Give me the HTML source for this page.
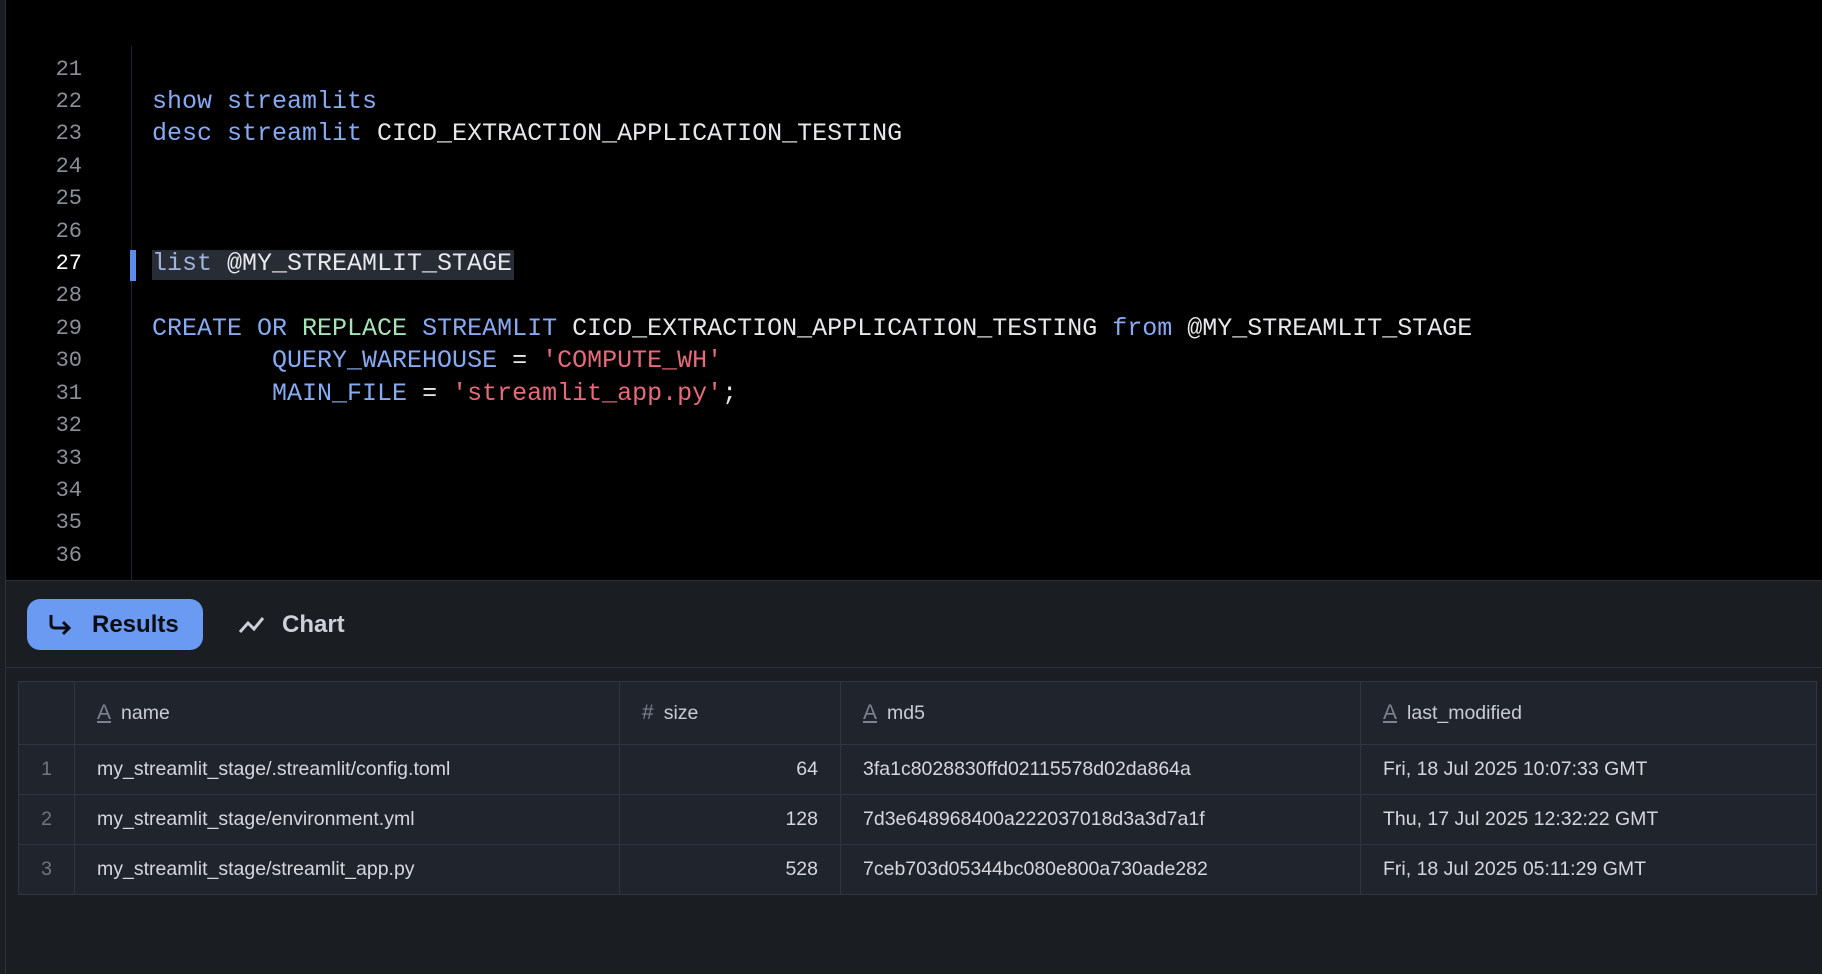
<!DOCTYPE html>
<html><head><meta charset="utf-8"><style>
*{margin:0;padding:0;box-sizing:border-box}
body{width:1822px;height:974px;background:#1a1d22;position:relative;overflow:hidden;font-family:"Liberation Sans",sans-serif}
#ed{position:absolute;left:0;top:0;width:1822px;height:581px;background:#000;border-bottom:1px solid #2b3039}
#lb{position:absolute;left:0;top:0;width:6px;height:974px;background:#1a1d22;border-right:1px solid #2c313a}
#gl{position:absolute;left:131px;top:46px;width:1px;height:535px;background:#22262d}
.ln{position:absolute;left:20px;width:62px;text-align:right;font:22px "Liberation Mono",monospace;color:#8a9099;line-height:32px}
.cd{position:absolute;left:152px;font:25px "Liberation Mono",monospace;letter-spacing:0px;color:#e8e8ea;line-height:32px;white-space:pre}
.k{color:#86aaf3}.g{color:#a6e3b9}.s{color:#e8697a}
#sel{position:absolute;left:152px;top:250px;width:362px;height:30px;background:#272c35}
#bar{position:absolute;left:130px;top:250px;width:6px;height:31px;background:#5b8def}
#btn{position:absolute;left:27px;top:599px;width:176px;height:51px;background:#6b9af3;border-radius:13px;color:#0b0d12;font-weight:bold;font-size:24px}
#chart{position:absolute;left:238px;top:599px;height:51px;color:#cdd0d6;font-weight:bold;font-size:24px}
#div{position:absolute;left:6px;top:667px;width:1816px;height:1px;background:#2c313a}
table{position:absolute;left:18px;top:681px;border-collapse:collapse;background:#1f242d;font-size:19.5px;color:#d4d7dc}
td{border:1px solid #2f3541;height:50px;padding:0 22px;white-space:nowrap}
tr.h td{height:63px;color:#c9ccd2;font-size:19.5px}
.n{color:#6f7682;text-align:center;padding:0}
.r{text-align:right}
.ic{color:#7d838e;margin-right:10px;font-size:21px}
</style></head><body>
<div id="ed"></div><div id="lb"></div><div id="gl"></div>
<div id="sel"></div><div id="bar"></div>
<div class="ln" style="top:54px">21</div>
<div class="ln" style="top:86px">22</div>
<div class="ln" style="top:118px">23</div>
<div class="ln" style="top:151px">24</div>
<div class="ln" style="top:183px">25</div>
<div class="ln" style="top:216px">26</div>
<div class="ln" style="top:248px;color:#fff">27</div>
<div class="ln" style="top:280px">28</div>
<div class="ln" style="top:313px">29</div>
<div class="ln" style="top:345px">30</div>
<div class="ln" style="top:378px">31</div>
<div class="ln" style="top:410px">32</div>
<div class="ln" style="top:443px">33</div>
<div class="ln" style="top:475px">34</div>
<div class="ln" style="top:507px">35</div>
<div class="ln" style="top:540px">36</div>
<div class="cd" style="top:86px"><span class="k">show streamlits</span></div>
<div class="cd" style="top:118px"><span class="k">desc streamlit</span> CICD_EXTRACTION_APPLICATION_TESTING</div>
<div class="cd" style="top:248px"><span style="color:#9fb3dd">list</span> @MY_STREAMLIT_STAGE</div>
<div class="cd" style="top:313px"><span class="k">CREATE OR</span> <span class="g">REPLACE</span> <span class="k">STREAMLIT</span> CICD_EXTRACTION_APPLICATION_TESTING <span class="k">from</span> @MY_STREAMLIT_STAGE</div>
<div class="cd" style="top:345px">        <span class="k">QUERY_WAREHOUSE</span> = <span class="s">'COMPUTE_WH'</span></div>
<div class="cd" style="top:378px">        <span class="k">MAIN_FILE</span> = <span class="s">'streamlit_app.py'</span>;</div>
<div id="btn"><svg style="position:absolute;left:20px;top:14px" width="28" height="24" viewBox="0 0 28 24"><path d="M4 2v9q0 4 4 4h14M16 9l6 6-6 6" fill="none" stroke="#0b0d12" stroke-width="3"/></svg><span style="position:absolute;left:65px;top:12px">Results</span></div>
<div id="chart"><svg style="position:absolute;left:0;top:15px" width="28" height="22" viewBox="0 0 28 22"><path d="M2 18l8-9 6 6 9-11" fill="none" stroke="#cdd0d6" stroke-width="3"/></svg><span style="position:absolute;left:44px;top:12px">Chart</span></div>
<div id="div"></div>
<table>
<tr class="h"><td style="width:56px"></td><td style="width:545px"><span class="ic"><u>A</u></span>name</td><td style="width:221px"><span class="ic">#</span>size</td><td style="width:520px"><span class="ic"><u>A</u></span>md5</td><td style="width:456px"><span class="ic"><u>A</u></span>last_modified</td></tr>
<tr><td class="n">1</td><td>my_streamlit_stage/.streamlit/config.toml</td><td class="r">64</td><td>3fa1c8028830ffd02115578d02da864a</td><td>Fri, 18 Jul 2025 10:07:33 GMT</td></tr>
<tr><td class="n">2</td><td>my_streamlit_stage/environment.yml</td><td class="r">128</td><td>7d3e648968400a222037018d3a3d7a1f</td><td>Thu, 17 Jul 2025 12:32:22 GMT</td></tr>
<tr><td class="n">3</td><td>my_streamlit_stage/streamlit_app.py</td><td class="r">528</td><td>7ceb703d05344bc080e800a730ade282</td><td>Fri, 18 Jul 2025 05:11:29 GMT</td></tr>
</table>
</body></html>
